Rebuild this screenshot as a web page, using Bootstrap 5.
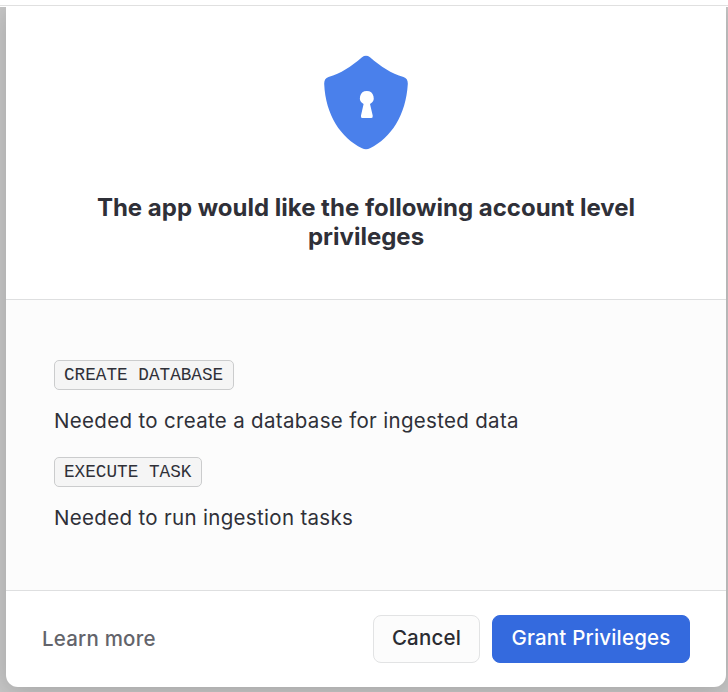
<!DOCTYPE html>
<html lang="en">
<head>
<meta charset="utf-8">
<meta name="viewport" content="width=device-width, initial-scale=1">
<title>Grant privileges</title>
<link href="https://cdn.jsdelivr.net/npm/bootstrap@5.3.0/dist/css/bootstrap.min.css" rel="stylesheet">
<style>
body{font-family:Inter,"Liberation Sans",sans-serif;background:#c6c6c6;color:#2f3038;height:692px;font-size:20.5px}
.topline{height:7px;background:#fff;flex:none}
.topline::before{content:"";display:block;height:6px;border-bottom:1px solid #e0e0e0}
.dialog-panel{width:720px;height:680px;margin-left:6px;border:0;border-radius:0 0 12px 12px;box-shadow:0 4px 24px rgba(0,0,0,.17);color:inherit;clip-path:inset(0 -10px -10px -10px)}
.panel-head{height:293px;padding:48px 48px 0;border-bottom:1px solid #dedfe0}
.panel-title{font-size:24px;line-height:29px;font-weight:700;margin:42px 0 0}
.panel-body{background:#fcfcfc;padding:60px 48px 0}
.privilege{height:97px}
.privilege-tag{font-family:"Liberation Mono",monospace;font-size:17.7px;line-height:28px;height:30px;padding:0 9.3px 0 9px;background:#f5f5f5;border:1px solid #cbcccd;border-radius:5px}
.privilege-note{line-height:30px;margin:15px 0 0;letter-spacing:.32px}
.panel-foot{height:97px;padding:0 36px;border-top:1px solid #dedfe0;border-radius:0 0 12px 12px}
.learn{color:#63646b;font-weight:500;letter-spacing:.2px}
.action{height:48px;border-radius:8px;font-size:20.5px;font-weight:500;padding:0 0 2px;line-height:1;letter-spacing:.2px}
.action-cancel{width:107px;background:#fcfcfc;border-color:#e2e3e4;color:#2b2c32}
.action-grant{width:198px;background:#346ade;border-color:#346ade;color:#fff}
</style>
</head>
<body class="overflow-hidden d-flex flex-column">
<div class="topline"></div>
<main class="card dialog-panel">
  <header class="panel-head text-center">
    <svg class="d-block mx-auto" width="86" height="96" viewBox="0 0 86 96" aria-hidden="true">
      <path fill="#4a80eb" d="M39 2.200Q43 -.500 47 2.200C58 11.500 68 18.500 80.500 22Q85 23.500 84.800 29C83 60 68 83 47 93.300Q43 95.400 39 93.300C18 83 2.500 60 1.200 29Q1 23.500 5.500 22C18 18.500 28 11.500 39 2.200Z"/>
      <path fill="#fff" d="M43.800 36a6.900 6.900 0 0 1 3.200 13L49.700 60.500Q50.100 63 48.300 63H39.300Q37.500 63 38 60.500L40.600 49A6.900 6.900 0 0 1 43.800 36Z"/>
    </svg>
    <h1 class="panel-title">The app would like the following account level privileges</h1>
  </header>
  <section class="panel-body flex-grow-1">
    <div class="privilege">
      <span class="privilege-tag d-inline-block align-top">CREATE DATABASE</span>
      <p class="privilege-note">Needed to create a database for ingested data</p>
    </div>
    <div class="privilege">
      <span class="privilege-tag d-inline-block align-top">EXECUTE TASK</span>
      <p class="privilege-note">Needed to run ingestion tasks</p>
    </div>
  </section>
  <footer class="panel-foot d-flex align-items-center">
    <a href="#" class="learn me-auto text-decoration-none">Learn more</a>
    <div class="d-flex">
      <button type="button" class="btn action action-cancel me-2">Cancel</button>
      <button type="button" class="btn action action-grant ms-1">Grant Privileges</button>
    </div>
  </footer>
</main>
<script src="https://cdn.jsdelivr.net/npm/bootstrap@5.3.0/dist/js/bootstrap.bundle.min.js"></script>
</body>
</html>
